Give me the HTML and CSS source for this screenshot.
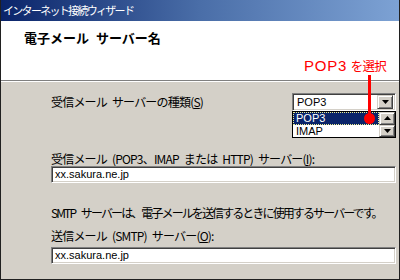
FILE: index.html
```html
<!DOCTYPE html>
<html lang="ja">
<head>
<meta charset="utf-8">
<link rel="stylesheet" href="styles.css">
</head>
<body>
<div class="win">
  <div class="titlebar"><span class="title">インターネット接続ウィザード</span></div>
  <div class="header"><h1 class="heading">電子メール サーバー名</h1></div>
  <div class="content">
    <div class="row">
      <span class="label">受信メール サーバーの種類(<u>S</u>)</span>
      <div class="combo">
        <span class="combo-text">POP3</span>
        <span class="btn combo-btn"><svg width="7" height="4" viewBox="0 0 7 4"><path d="M0 0h7L3.5 4z" fill="#000"/></svg></span>
        <div class="dropdown">
          <div class="items">
            <div class="item selected">POP3</div>
            <div class="item">IMAP</div>
          </div>
          <div class="scrollbar">
            <span class="btn sb-btn"><svg width="7" height="4" viewBox="0 0 7 4"><path d="M0 4h7L3.5 0z" fill="#000"/></svg></span>
            <span class="btn sb-btn"><svg width="7" height="4" viewBox="0 0 7 4"><path d="M0 0h7L3.5 4z" fill="#000"/></svg></span>
          </div>
        </div>
      </div>
    </div>
    <div class="label l2">受信メール (POP3、IMAP または HTTP) サーバー(<u>I</u>):</div>
    <div class="field">xx.sakura.ne.jp</div>
    <div class="label note">SMTP サーバーは、電子メールを送信するときに使用するサーバーです。</div>
    <div class="label l4">送信メール (SMTP) サーバー(<u>O</u>):</div>
    <div class="field f2">xx.sakura.ne.jp</div>
  </div>
  <div class="annot">
    <span class="annot-text"><span class="annot-latin">POP3</span> <span class="annot-cjk">を選択</span></span>
    <span class="annot-line"></span>
    <span class="annot-dot"></span>
  </div>
</div>
</body>
</html>
```
FILE: styles.css
```css
html, body {
  margin: 0;
  padding: 0;
  background: #d4d0c8;
}
.win {
  position: relative;
  width: 400px;
  height: 280px;
  box-sizing: border-box;
  border-left: 1px solid #202020;
  border-right: 1px solid #202020;
  border-bottom: 1px solid #202020;
  background: #d4d0c8;
  overflow: hidden;
  font-family: "Noto Sans CJK JP", "Liberation Sans", sans-serif;
  color: #000;
}
.titlebar {
  height: 21px;
  background: linear-gradient(to right, #0a246a 0%, #4a6ea8 50%, #7da2d4 100%);
  display: flex;
  align-items: center;
  padding-left: 2px;
}
.title {
  color: #fff;
  font-size: 11px;
  letter-spacing: -1.7px;
  line-height: 13px;
  white-space: nowrap;
}
.header {
  height: 60px;
  box-sizing: border-box;
  background: #fff;
  border-bottom: 1px solid #808080;
  padding: 9px 0 0 23px;
}
.heading {
  margin: 0;
  font-size: 13px;
  line-height: 16px;
  font-weight: bold;
  white-space: nowrap;
  word-spacing: 4px;
}
.content {
  border-top: 1px solid #fff;
  padding: 0 3px 0 50px;
  display: flex;
  flex-direction: column;
}
.row {
  margin-top: 11px;
  height: 18px;
  display: flex;
  align-items: center;
}
.label {
  font-size: 12px;
  line-height: 14px;
  letter-spacing: -0.8px;
  word-spacing: 3px;
  white-space: nowrap;
}
.row .label {
  line-height: 18px;
}
.l2 { margin-top: 41px; }
.note { margin-top: 23px; letter-spacing: -1.9px; word-spacing: 5px; }
.l4 { margin-top: 9px; }
.field {
  height: 17px;
  box-sizing: border-box;
  background: #fff;
  border: 1px solid;
  border-color: #808080 #fff #fff #808080;
  box-shadow: inset 1px 1px #404040, inset -1px -1px #d4d0c8;
  padding-left: 3px;
  font-family: "Liberation Sans", sans-serif;
  font-size: 11px;
  line-height: 15px;
}
.f2 { margin-top: 4px; }
.combo {
  position: relative;
  margin-left: auto;
  width: 104px;
  height: 18px;
  box-sizing: border-box;
  background: #fff;
  border: 1px solid;
  border-color: #808080 #fff #fff #808080;
  box-shadow: inset 1px 1px #404040, inset -1px -1px #d4d0c8;
  display: flex;
  align-items: center;
  padding: 2px 2px 2px 4px;
}
.combo-text {
  flex: 1;
  font-family: "Liberation Sans", sans-serif;
  font-size: 11px;
  line-height: 14px;
}
.btn {
  background: #d4d0c8;
  box-sizing: border-box;
  border: 1px solid;
  border-color: #d4d0c8 #404040 #404040 #d4d0c8;
  box-shadow: inset 1px 1px #fff, inset -1px -1px #808080;
  display: flex;
  align-items: center;
  justify-content: center;
}
.combo-btn {
  width: 16px;
  height: 14px;
}
.dropdown {
  position: absolute;
  top: 17px;
  left: -1px;
  width: 104px;
  height: 27px;
  box-sizing: border-box;
  border: 1px solid #000;
  background: #fff;
  display: flex;
}
.items {
  flex: 1;
  display: flex;
  flex-direction: column;
}
.item {
  height: 12.5px;
  line-height: 12px;
  padding-left: 3px;
  font-family: "Liberation Sans", sans-serif;
  font-size: 11px;
  box-sizing: border-box;
}
.item.selected {
  background: #0a246a;
  color: #fff;
  outline: 1px dotted #f0f090;
  outline-offset: -1px;
}
.scrollbar {
  width: 16px;
  display: flex;
  flex-direction: column;
}
.sb-btn {
  height: 12.5px;
}
.annot {
  position: absolute;
  left: 0;
  top: 0;
}
.annot-text {
  position: absolute;
  left: 303px;
  top: 56px;
  color: #ff0000;
  white-space: nowrap;
  line-height: 16px;
}
.annot-latin {
  font-family: "Liberation Sans", sans-serif;
  font-size: 15px;
  letter-spacing: 0.8px;
}
.annot-cjk {
  font-family: "Noto Sans CJK JP", sans-serif;
  font-size: 12.5px;
  letter-spacing: -0.8px;
}
.annot-line {
  position: absolute;
  left: 367px;
  top: 75px;
  width: 3px;
  height: 44px;
  background: #ff0000;
}
.annot-dot {
  position: absolute;
  left: 363px;
  top: 113px;
  width: 11px;
  height: 11px;
  border-radius: 50%;
  background: #ff0000;
}
```
